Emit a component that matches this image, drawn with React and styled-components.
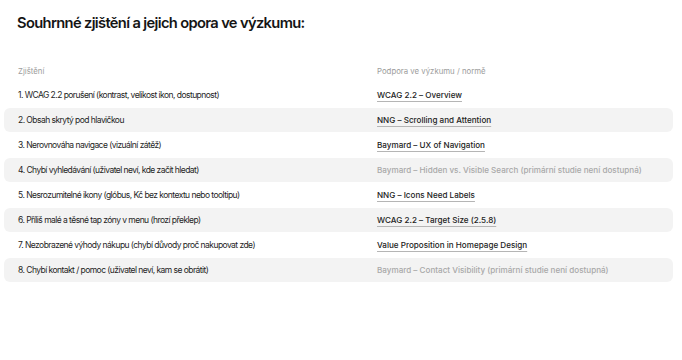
import React from "react"
import styled, { createGlobalStyle } from "styled-components"

const GlobalStyle = createGlobalStyle`
  html, body {
    margin: 0;
    padding: 0;
    background: #ffffff;
  }
  body {
    font-family: Inter, "Noto Sans", sans-serif;
    color: #1c1c1c;
  }
`

const Page = styled.div`
  width: 682px;
  height: 360px;
  box-sizing: border-box;
  padding: 13px 9px 0 4px;
`

const Title = styled.h2`
  margin: 0 0 27px 13px;
  font-size: 14.7px;
  font-weight: 600;
  letter-spacing: -0.65px;
  line-height: 20px;
  color: #151515;
`

const Table = styled.div`
  display: flex;
  flex-direction: column;
  gap: 1px;
`

const Row = styled.div`
  display: grid;
  grid-template-columns: 359px 1fr;
  align-items: center;
  height: 24px;
  padding-left: 14px;
  border-radius: 6px;
  background: ${(p) => (p.$shaded ? "#f3f3f3" : "transparent")};
  font-size: 8.1px;
`

const HeadRow = styled(Row)`
  height: 22px;
  font-size: 7.8px;
  color: #9c9c9c;
`

const Finding = styled.span`
  color: #1e1e1e;
  font-size: 8.5px;
  letter-spacing: -0.55px;
`

const Source = styled.a`
  color: ${(p) => (p.$muted ? "#a8a8a8" : "#222")};
  text-decoration: ${(p) => (p.$muted ? "none" : "underline")};
  text-decoration-color: #b5b5b5;
  text-decoration-thickness: 1px;
  text-underline-offset: 2.5px;
  font-weight: 500;
`

const rows = [
  ["1. WCAG 2.2 porušení (kontrast, velikost ikon, dostupnost)", "WCAG 2.2 – Overview"],
  ["2. Obsah skrytý pod hlavičkou", "NNG – Scrolling and Attention"],
  ["3. Nerovnováha navigace (vizuální zátěž)", "Baymard – UX of Navigation"],
  ["4. Chybí vyhledávání (uživatel neví, kde začít hledat)", "Baymard – Hidden vs. Visible Search (primární studie není dostupná)", true],
  ["5. Nesrozumitelné ikony (glóbus, Kč bez kontextu nebo tooltipu)", "NNG – Icons Need Labels"],
  ["6. Příliš malé a těsné tap zóny v menu (hrozí překlep)", "WCAG 2.2 – Target Size (2.5.8)"],
  ["7. Nezobrazené výhody nákupu (chybí důvody proč nakupovat zde)", "Value Proposition in Homepage Design"],
  ["8. Chybí kontakt / pomoc (uživatel neví, kam se obrátit)", "Baymard – Contact Visibility (primární studie není dostupná)", true],
]

export default function App() {
  return (
    <Page>
      <GlobalStyle />
      <Title>Souhrnné zjištění a jejich opora ve výzkumu:</Title>
      <Table>
        <HeadRow>
          <span>Zjištění</span>
          <span>Podpora ve výzkumu / normě</span>
        </HeadRow>
        {rows.map(([finding, source, muted], i) => (
          <Row key={i} $shaded={i % 2 === 1}>
            <Finding>{finding}</Finding>
            <span>
              <Source $muted={muted}>{source}</Source>
            </span>
          </Row>
        ))}
      </Table>
    </Page>
  )
}
